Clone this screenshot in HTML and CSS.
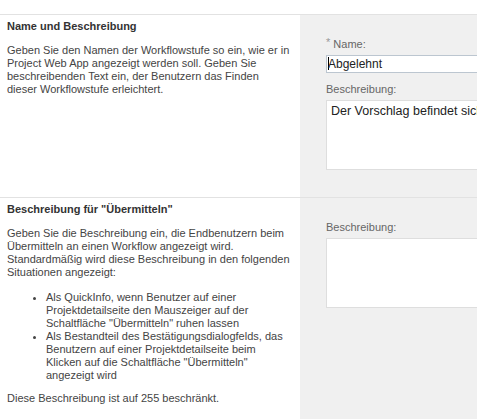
FILE: index.html
```html
<!DOCTYPE html>
<html lang="de">
<head>
<meta charset="utf-8">
<title>Workflowstufe</title>
<link rel="stylesheet" href="styles.css">
</head>
<body>
<div class="topbar"></div>
<div class="section s1">
  <div class="desc">
    <h3 class="title">Name und Beschreibung</h3>
    <p class="text">Geben Sie den Namen der Workflowstufe so ein, wie er in Project Web App angezeigt werden soll. Geben Sie beschreibenden Text ein, der Benutzern das Finden dieser Workflowstufe erleichtert.</p>
  </div>
  <div class="panel">
    <div class="label"><span class="req">*</span> Name:</div>
    <div class="input"><span class="caret"></span>Abgelehnt</div>
    <div class="label lbl2">Beschreibung:</div>
    <div class="area">Der Vorschlag befindet sich in einem abgelehnten Zustand.</div>
  </div>
</div>
<div class="section s2">
  <div class="desc">
    <h3 class="title">Beschreibung für "Übermitteln"</h3>
    <p class="text">Geben Sie die Beschreibung ein, die Endbenutzern beim Übermitteln an einen Workflow angezeigt wird. Standardmäßig wird diese Beschreibung in den folgenden Situationen angezeigt:</p>
    <ul class="list">
      <li>Als QuickInfo, wenn Benutzer auf einer Projektdetailseite den Mauszeiger auf der Schaltfläche "Übermitteln" ruhen lassen</li>
      <li>Als Bestandteil des Bestätigungsdialogfelds, das Benutzern auf einer Projektdetailseite beim Klicken auf die Schaltfläche "Übermitteln" angezeigt wird</li>
    </ul>
    <p class="text note">Diese Beschreibung ist auf 255 beschränkt.</p>
  </div>
  <div class="panel">
    <div class="label">Beschreibung:</div>
    <div class="area empty"></div>
  </div>
</div>
</body>
</html>
```
FILE: styles.css
```css
html, body {
  margin: 0;
  padding: 0;
  background: #ffffff;
  height: 100%;
}
body {
  font-family: "Liberation Sans", Arial, sans-serif;
  font-size: 11px;
  line-height: 13px;
  color: #444444;
  overflow: hidden;
}
.topbar {
  height: 14px;
}
.section {
  display: grid;
  grid-template-columns: 300px 1fr;
  border-top: 1px solid #e2e2e2;
}
.s1 {
  height: 182px;
}
.s2 {
  height: 240px;
}
.desc {
  padding: 5px 10px 0 7px;
}
.title {
  margin: 0;
  font-size: 11px;
  line-height: 13px;
  font-weight: bold;
  color: #333333;
}
.text {
  margin: 11px 0 0 0;
}
.list {
  margin: 12px 0 0 0;
  padding: 0 0 0 39px;
}
.note {
  margin-top: 10px;
}
.panel {
  background: #f0f0f0;
  padding: 23px 0 0 26px;
  overflow: hidden;
}
.label {
  color: #666666;
  height: 13px;
  white-space: nowrap;
}
.req {
  color: #999999;
  position: relative;
  top: -2px;
}
.input {
  margin-top: 4px;
  width: 200px;
  height: 16px;
  line-height: 16px;
  background: #ffffff;
  border: 1px solid #bcc6d0;
  padding-left: 1px;
  font-size: 12px;
  color: #222222;
  white-space: nowrap;
}
.caret {
  display: inline-block;
  width: 1px;
  height: 13px;
  background: #000000;
  vertical-align: -2px;
  margin-right: -1px;
}
.lbl2 {
  margin-top: 10px;
}
.area {
  margin-top: 4px;
  width: 220px;
  background: #ffffff;
  border: 1px solid #dedede;
  padding: 3px 4px;
  box-sizing: border-box;
  height: 70px;
  font-family: "Liberation Sans", Arial, sans-serif;
  font-size: 12.5px;
  line-height: 15px;
  color: #222222;
  white-space: nowrap;
}
```
